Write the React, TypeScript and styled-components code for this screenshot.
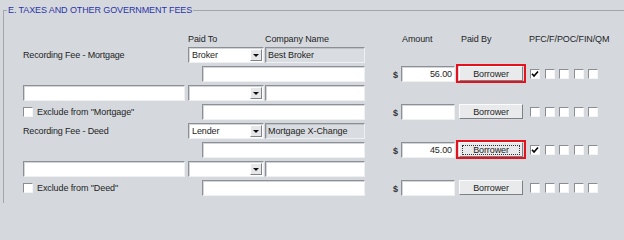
import React from "react";
import styled, { createGlobalStyle } from "styled-components";

const GlobalStyle = createGlobalStyle`
  html, body {
    margin: 0;
    padding: 0;
    height: 203px;
    overflow: hidden;
    background: #d5d9de;
  }
  body {
    font-family: "Liberation Sans", Arial, sans-serif;
    font-size: 9px;
    color: #1e1e1e;
  }
`;

const Page = styled.div`
  position: relative;
  width: 624px;
  height: 203px;
  overflow: hidden;
  box-sizing: border-box;
  padding: 4px 0 0 3px;
  background: #d5d9de;
`;

const Group = styled.fieldset`
  height: 240px;
  box-sizing: border-box;
  margin: 0 -30px 0 0;
  padding: 0;
  min-width: 0;
  border: 1px solid #a2a6ab;
`;

const Legend = styled.legend`
  margin-left: 3px;
  padding: 0 1px;
  color: #2b34a6;
  font-size: 9px;
  line-height: 13px;
  letter-spacing: -0.1px;
`;

const Grid = styled.div`
  margin-top: 16px;
  padding-left: 19px;
`;

const Row = styled.div<{ $head?: boolean }>`
  display: grid;
  grid-template-columns: 165px 14px 63px 101px 27px 8px 55px 70px 1fr;
  height: ${(p) => (p.$head ? 12 : 19)}px;
  align-items: ${(p) => (p.$head ? "end" : "center")};
`;

const Heading = styled.span<{ $col: string; $indent?: number }>`
  grid-column: ${(p) => p.$col};
  padding-left: ${(p) => p.$indent ?? 0}px;
  line-height: 12px;
  letter-spacing: -0.1px;
  white-space: nowrap;
`;

const FeeName = styled.span`
  grid-column: 1;
  letter-spacing: -0.15px;
  white-space: nowrap;
`;

const Field = styled.div<{ $col: string; $w: number; $ro?: boolean; $right?: boolean }>`
  grid-column: ${(p) => p.$col};
  width: ${(p) => p.$w}px;
  height: 16px;
  box-sizing: border-box;
  display: flex;
  align-items: center;
  justify-content: ${(p) => (p.$right ? "flex-end" : "flex-start")};
  padding: 0 2px;
  background: ${(p) => (p.$ro ? "#d9dce0" : "#ffffff")};
  border: 1px solid;
  border-color: #8c9095 #eef0f2 #eef0f2 #8c9095;
  box-shadow: inset 1px 1px 0 ${(p) => (p.$ro ? "#bfc3c8" : "#d2d5d9")};
  letter-spacing: -0.1px;
  white-space: nowrap;
  overflow: hidden;
`;

const Combo = styled.div`
  grid-column: 2 / 4;
  width: 76px;
  height: 16px;
  box-sizing: border-box;
  display: flex;
  align-items: stretch;
  background: #ffffff;
  border: 1px solid;
  border-color: #8c9095 #eef0f2 #eef0f2 #8c9095;
  box-shadow: inset 1px 1px 0 #d2d5d9;
`;

const ComboText = styled.span`
  flex: 1;
  display: flex;
  align-items: center;
  padding-left: 3px;
  letter-spacing: -0.1px;
`;

const DropButton = styled.span`
  width: 12px;
  margin: 1px 1px 1px 0;
  box-sizing: border-box;
  display: flex;
  align-items: center;
  justify-content: center;
  background: #e6e7e9;
  border: 1px solid;
  border-color: #ffffff #7f8388 #7f8388 #ffffff;

  &::before {
    content: "";
    border-left: 3px solid transparent;
    border-right: 3px solid transparent;
    border-top: 3px solid #111;
    margin-top: 1px;
  }
`;

const Dollar = styled.span`
  grid-column: 6;
  font-weight: 700;
  color: #333;
  padding-top: 2px;
`;

const Frame = styled.div<{ $on: boolean }>`
  grid-column: 8;
  width: 70px;
  height: 19px;
  box-sizing: border-box;
  display: flex;
  align-items: center;
  justify-content: center;
  border: 2px solid ${(p) => (p.$on ? "#e3121c" : "transparent")};
`;

const PayerButton = styled.button<{ $focus?: boolean }>`
  position: relative;
  width: 64px;
  height: 15px;
  padding: 0;
  box-sizing: border-box;
  font-family: "Liberation Sans", Arial, sans-serif;
  font-size: 9px;
  letter-spacing: -0.1px;
  color: #1e1e1e;
  background: #e9eaeb;
  border: 1px solid;
  border-color: #fbfbfb #7d8186 #7d8186 #fbfbfb;

  &::after {
    content: "";
    display: ${(p) => (p.$focus ? "block" : "none")};
    position: absolute;
    inset: 2px 2px 1px 2px;
    border: 1px dotted #333;
  }
`;

const Checks = styled.div`
  grid-column: 9;
  display: flex;
  gap: 4.5px;
  padding-left: 4px;
`;

const Box = styled.span`
  width: 10px;
  height: 10px;
  box-sizing: border-box;
  display: inline-flex;
  align-items: center;
  justify-content: center;
  background: #ffffff;
  border: 1px solid;
  border-color: #8a8e93 #f4f5f6 #f4f5f6 #8a8e93;
`;

const Exclude = styled.label`
  grid-column: 1;
  display: flex;
  align-items: center;
  gap: 4px;
  letter-spacing: -0.1px;
  white-space: nowrap;
`;

function CheckBox({ on }: { on?: boolean }) {
  return (
    <Box>
      {on && (
        <svg width="8" height="8" viewBox="0 0 8 8">
          <polyline points="1,3.8 3,6 7,1.5" fill="none" stroke="#000" strokeWidth="1.6" />
        </svg>
      )}
    </Box>
  );
}

type Fee = {
  name: string;
  paidTo: string;
  company: string;
  amount: string;
  exclude: string;
  focus?: boolean;
};

const fees: Fee[] = [
  { name: "Recording Fee - Mortgage", paidTo: "Broker", company: "Best Broker", amount: "56.00", exclude: "Mortgage" },
  { name: "Recording Fee - Deed", paidTo: "Lender", company: "Mortgage X-Change", amount: "45.00", exclude: "Deed", focus: true },
];

function AmountCells({ amount, on, focus, checked }: { amount: string; on: boolean; focus?: boolean; checked: boolean }) {
  return (
    <>
      <Dollar>$</Dollar>
      <Field $col="7" $w={54} $right>
        {amount}
      </Field>
      <Frame $on={on}>
        <PayerButton $focus={focus}>Borrower</PayerButton>
      </Frame>
      <Checks>
        {[0, 1, 2, 3, 4].map((i) => (
          <CheckBox key={i} on={checked && i === 0} />
        ))}
      </Checks>
    </>
  );
}

function FeeBlock({ fee }: { fee: Fee }) {
  return (
    <>
      <Row>
        <FeeName>{fee.name}</FeeName>
        <Combo>
          <ComboText>{fee.paidTo}</ComboText>
          <DropButton />
        </Combo>
        <Field $col="4" $w={100} $ro>
          {fee.company}
        </Field>
      </Row>
      <Row>
        <Field $col="3 / 5" $w={163} />
        <AmountCells amount={fee.amount} on focus={fee.focus} checked />
      </Row>
      <Row>
        <Field $col="1" $w={162} />
        <Combo>
          <ComboText />
          <DropButton />
        </Combo>
        <Field $col="4" $w={100} />
      </Row>
      <Row>
        <Exclude>
          <CheckBox />
          Exclude from "{fee.exclude}"
        </Exclude>
        <Field $col="3 / 5" $w={163} />
        <AmountCells amount="" on={false} checked={false} />
      </Row>
    </>
  );
}

export default function App() {
  return (
    <>
      <GlobalStyle />
      <Page>
        <Group>
          <Legend>E. TAXES AND OTHER GOVERNMENT FEES</Legend>
          <Grid>
            <Row $head>
              <Heading $col="2 / 4">Paid To</Heading>
              <Heading $col="4">Company Name</Heading>
              <Heading $col="7" $indent={1}>Amount</Heading>
              <Heading $col="8" $indent={5}>Paid By</Heading>
              <Heading $col="9" $indent={3}>PFC/F/POC/FIN/QM</Heading>
            </Row>
            {fees.map((fee) => (
              <FeeBlock key={fee.name} fee={fee} />
            ))}
          </Grid>
        </Group>
      </Page>
    </>
  );
}
